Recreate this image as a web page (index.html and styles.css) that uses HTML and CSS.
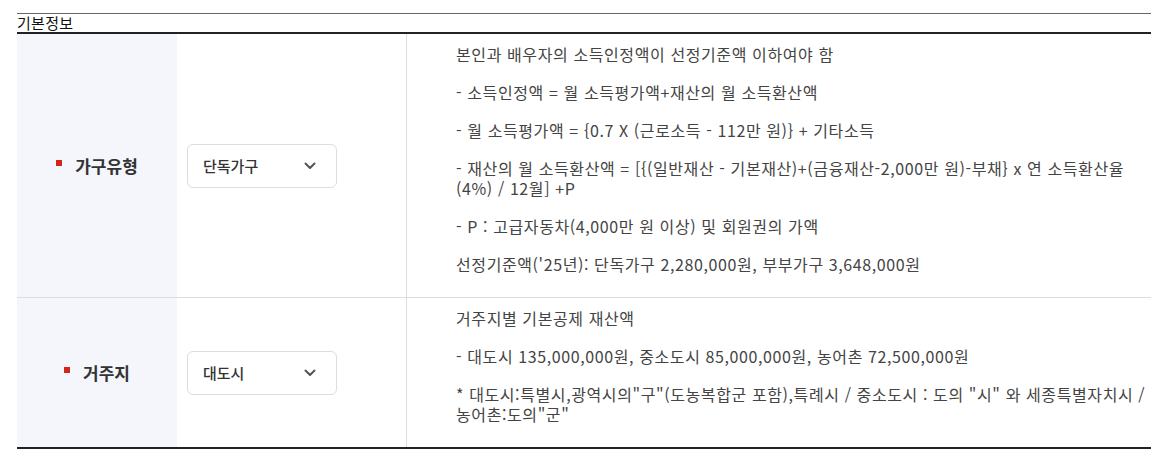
FILE: index.html
```html
<!DOCTYPE html>
<html lang="ko">
<head>
<meta charset="utf-8">
<title>기본정보</title>
<link rel="stylesheet" href="styles.css">
</head>
<body>
<section class="info">
  <div class="caption">기본정보</div>
  <div class="table">
    <div class="row">
      <div class="label"><span class="req"></span>가구유형</div>
      <div class="field">
        <div class="select"><span>단독가구</span><svg class="chev" width="12" height="8" viewBox="0 0 12 8"><path d="M1.5 1.5 L6 6 L10.5 1.5" fill="none" stroke="#555" stroke-width="2" stroke-linecap="round" stroke-linejoin="round"/></svg></div>
      </div>
      <div class="desc">
        <p>본인과 배우자의 소득인정액이 선정기준액 이하여야 함</p>
        <p>- 소득인정액 = 월 소득평가액+재산의 월 소득환산액</p>
        <p>- 월 소득평가액 = {0.7 X (근로소득 - 112만 원)} + 기타소득</p>
        <p>- 재산의 월 소득환산액 = [{(일반재산 - 기본재산)+(금융재산-2,000만 원)-부채} x 연 소득환산율(4%) / 12월] +P</p>
        <p>- P : 고급자동차(4,000만 원 이상) 및 회원권의 가액</p>
        <p>선정기준액('25년): 단독가구 2,280,000원, 부부가구 3,648,000원</p>
      </div>
    </div>
    <div class="row">
      <div class="label"><span class="req"></span>거주지</div>
      <div class="field">
        <div class="select"><span>대도시</span><svg class="chev" width="12" height="8" viewBox="0 0 12 8"><path d="M1.5 1.5 L6 6 L10.5 1.5" fill="none" stroke="#555" stroke-width="2" stroke-linecap="round" stroke-linejoin="round"/></svg></div>
      </div>
      <div class="desc">
        <p>거주지별 기본공제 재산액</p>
        <p>- 대도시 135,000,000원, 중소도시 85,000,000원, 농어촌 72,500,000원</p>
        <p>* 대도시:특별시,광역시의"구"(도농복합군 포함),특례시 / 중소도시 : 도의 "시" 와 세종특별자치시&nbsp;/ 농어촌:도의"군"</p>
      </div>
    </div>
  </div>
</section>
</body>
</html>
```
FILE: styles.css
```css
html, body {
  margin: 0;
  padding: 0;
  background: #fff;
}
body {
  font-family: "Noto Sans CJK KR", "Noto Sans", sans-serif;
  color: #333;
}
.info {
  margin: 13px 21px 0 17px;
  border-top: 1px solid #666;
}
.caption {
  font-size: 15px;
  line-height: 18px;
  letter-spacing: 0.3px;
  color: #111;
}
.table {
  border-top: 2px solid #222;
  border-bottom: 2px solid #222;
}
.row {
  display: grid;
  grid-template-columns: 160px 230px 1fr;
}
.row + .row {
  border-top: 1px solid #ddd;
}
.label {
  background: #f4f6fb;
  display: flex;
  align-items: center;
  justify-content: center;
  gap: 13px;
  font-size: 17px;
  font-weight: 700;
  color: #333;
}
.req {
  width: 6px;
  height: 6px;
  background: #d3261b;
  margin-top: -6px;
}
.field {
  display: flex;
  align-items: center;
  padding-left: 10px;
  border-right: 1px solid #ddd;
}
.select {
  width: 150px;
  height: 44px;
  box-sizing: border-box;
  border: 1px solid #ddd;
  border-radius: 6px;
  display: flex;
  align-items: center;
  justify-content: space-between;
  padding: 0 20px 0 15px;
  font-size: 15px;
  font-weight: 500;
  color: #333;
}
.chev {
  display: block;
}
.desc {
  padding: 10px 3px 5px 49px;
  font-size: 16px;
  line-height: 20px;
  letter-spacing: 0.6px;
  color: #444;
}
.desc p {
  margin: 0 0 18px;
}
```
